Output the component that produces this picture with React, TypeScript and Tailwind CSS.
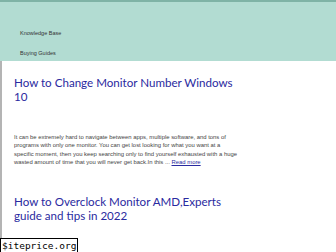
export default function App() {
  return (
    <div className="relative w-[336px] h-[252px] overflow-hidden bg-white">
      {/* Header */}
      <header className="h-[61px] bg-[#b2dcd2] border-t-2 border-[#7fb3a6]">
        <nav className="flex flex-col pl-[20px] pt-[27px] gap-[11px] font-['Liberation_Sans',sans-serif] text-[5.5px] text-[#333]">
          <a href="#" className="leading-[9px]">Knowledge Base</a>
          <a href="#" className="leading-[9px]">Buying Guides</a>
        </nav>
      </header>

      {/* Content */}
      <main className="h-[191px] border-l-2 border-[#b4b4b4] pl-[12px] pr-4">
        <article className="pt-[15px]">
          <h2 className="font-['Lato',sans-serif] text-[11.6px] leading-[13.5px] text-[#2a2aa0]">
            How to Change Monitor Number Windows
            <br />
            10
          </h2>
          <p className="mt-[30px] font-['Liberation_Sans',sans-serif] text-[5.9px] leading-[8.4px] text-[#444]">
            It can be extremely hard to navigate between apps, multiple software, and tons of
            <br />
            programs with only one monitor. You can get lost looking for what you want at a
            <br />
            specific moment, then you keep searching only to find yourself exhausted with a huge
            <br />
            wasted amount of time that you will never get back.In this ...{" "}
            <a href="#" className="underline text-[#2a2aa0]">Read more</a>
          </p>
        </article>
        <article className="pt-[28px]">
          <h2 className="font-['Lato',sans-serif] text-[11.6px] leading-[14px] text-[#2a2aa0]">
            How to Overclock Monitor AMD,Experts
            <br />
            guide and tips in 2022
          </h2>
        </article>
      </main>

      {/* Watermark badge */}
      <div className="absolute left-0 top-[238px] border border-black bg-white px-px font-['DejaVu_Sans_Mono',monospace] text-[9.5px] leading-[13px] text-black">
        $iteprice.org
      </div>
    </div>
  );
}
